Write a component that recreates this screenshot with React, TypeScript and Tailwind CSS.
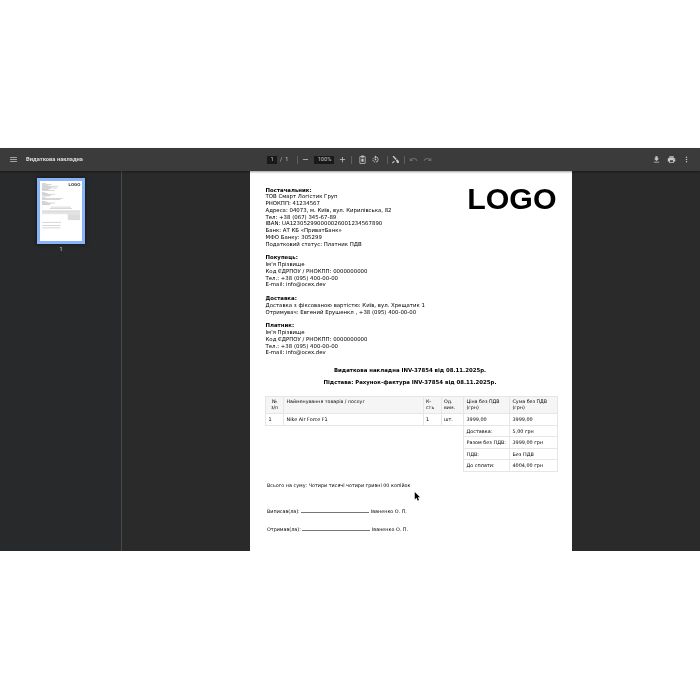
import React from "react";

const Icon = ({ d, className }: { d: string; className?: string }) => (
    <svg viewBox="0 0 24 24" fill="currentColor" className={"w-[9px] h-[9px] shrink-0 " + (className ?? "")}>
        <path d={d} />
    </svg>
);

const icons = {
    menu: "M3 18h18v-2H3v2zm0-5h18v-2H3v2zm0-7v2h18V6H3z",
    minus: "M19 13H5v-2h14v2z",
    plus: "M19 13h-6v6h-2v-6H5v-2h6V5h2v6h6v2z",
    fit: "M6 3h3V1h6v2h3a2 2 0 0 1 2 2v16a2 2 0 0 1-2 2H6a2 2 0 0 1-2-2V5a2 2 0 0 1 2-2zm0 2v16h12V5h-3v2H9V5H6zm3 5h6v8H9v-8z",
    rotate: "M7.11 8.53L5.7 7.11C4.8 8.27 4.24 9.61 4.07 11h2.02c.14-.87.49-1.72 1.02-2.47zM6.09 13H4.07c.17 1.39.72 2.73 1.62 3.89l1.41-1.42c-.52-.75-.87-1.59-1.01-2.47zm1.01 5.32c1.16.9 2.51 1.44 3.9 1.61V17.9c-.87-.15-1.71-.49-2.46-1.03L7.1 18.32zM13 4.07V1L8.45 5.55 13 10V6.09c2.84.48 5 2.94 5 5.91s-2.16 5.43-5 5.91v2.02c3.95-.49 7-3.85 7-7.93s-3.05-7.44-7-7.93zM10 10h4v4h-4z",
    annotate: "M4 4l3-2 8 8-3 3-8-9zm9 10l3-3 5 5v5h-5l-3-7zM3 20l5-5 2 2-5 5H3v-2z",
    undo: "M12.5 8c-2.65 0-5.05.99-6.9 2.6L2 7v9h9l-3.62-3.62c1.39-1.16 3.16-1.88 5.12-1.88 3.54 0 6.55 2.31 7.6 5.5l2.37-.78C21.08 11.03 17.15 8 12.5 8z",
    redo: "M18.4 10.6C16.55 8.99 14.15 8 11.5 8c-4.65 0-8.58 3.03-9.96 7.22L3.9 16c1.05-3.19 4.05-5.5 7.6-5.5 1.95 0 3.73.72 5.12 1.88L13 16h9V7l-3.6 3.6z",
    download: "M19 9h-4V3H9v6H5l7 7 7-7zM5 18v2h14v-2H5z",
    print: "M19 8H5c-1.66 0-3 1.34-3 3v6h4v4h12v-4h4v-6c0-1.66-1.34-3-3-3zm-3 11H8v-5h8v5zm3-7c-.55 0-1-.45-1-1s.45-1 1-1 1 .45 1 1-.45 1-1 1zm-1-9H6v4h12V3z",
    more: "M12 8c1.1 0 2-.9 2-2s-.9-2-2-2-2 .9-2 2 .9 2 2 2zm0 2c-1.1 0-2 .9-2 2s.9 2 2 2 2-.9 2-2-.9-2-2-2zm0 6c-1.1 0-2 .9-2 2s.9 2 2 2 2-.9 2-2-.9-2-2-2z",
};

const Block = ({ title, lines }: { title: string; lines: string[] }) => (
    <div className="mb-[7px]">
        <div className="font-bold">{title}</div>
        {lines.map((l) => (
            <div key={l}>{l}</div>
        ))}
    </div>
);

// thumbnail lines: [x, y, width], in page pixels
const thumbLines = [
    [15, 18, 32], [15, 25, 75], [15, 32, 50], [15, 38, 125], [15, 45, 70], [15, 52, 115], [15, 59, 65], [15, 65, 50], [15, 72, 97],
    [15, 86, 25], [15, 93, 45], [15, 99, 102], [15, 106, 70], [15, 113, 60],
    [15, 127, 28], [15, 133, 160], [15, 140, 140],
    [15, 154, 25], [15, 160, 45], [15, 167, 102], [15, 174, 70], [15, 180, 60],
    [83, 198, 153], [73, 211, 173],
    [17, 314, 144], [17, 341, 140], [17, 358, 140],
];

const Thumb = () => (
    <svg viewBox="0 0 322 460" className="w-[42px] h-[60px] block bg-white">
        <g fill="#a8a8a8">
            {thumbLines.map(([x, y, w]) => (
                <rect key={x + "-" + y} x={x} y={y} width={w} height="3.5" />
            ))}
        </g>
        <g fill="#dcdcdc">
            <rect x="15" y="225" width="292" height="18" />
            <rect x="15" y="243" width="292" height="11" opacity="0.8" />
            <rect x="213" y="254" width="94" height="46" />
        </g>
        <text x="218" y="40" fontSize="31" fontWeight="700" fontFamily="Liberation Sans, sans-serif" fill="#111">LOGO</text>
    </svg>
);

const cell = "border border-[#e6e6e6] px-[2.5px] py-[2px] align-top whitespace-nowrap";
const head = "border border-[#e6e6e6] px-[2.5px] py-[2px] align-top bg-[#f5f5f5] text-[4.75px]";

const totals = [
    ["Доставка:", "5,00 грн"],
    ["Разом без ПДВ:", "3999,00 грн"],
    ["ПДВ:", "Без ПДВ"],
    ["До сплати:", "4004,00 грн"],
];

const Sep = ({ className }: { className: string }) => <div className={"w-px h-[8px] bg-[#5f5f5f] " + className} />;

export default function App() {
    return (
        <div className="w-[700px] h-[700px] bg-white overflow-hidden pt-[148px] font-['DejaVu_Sans',sans-serif]">
            <div className="h-[403px] flex flex-col bg-[#2a2a2a]">
                <header className="h-[23px] shrink-0 bg-[#3b3b3b] flex items-center text-[#c8c8c8] shadow-[0_1px_2px_#00000066] relative z-10 blur-[0.2px]">
                    <div className="w-[250px] flex items-center pl-[8.5px]">
                        <Icon d={icons.menu} />
                        <span className="ml-[8.5px] text-[5.8px] font-bold font-['Roboto',sans-serif] text-[#dcdcdc]">Видаткова накладна</span>
                    </div>
                    <div className="flex items-center text-[5.6px]">
                        <span className="ml-[17px] w-[10px] h-[8px] bg-[#191919] flex items-center justify-center font-['Roboto',sans-serif]">1</span>
                        <span className="ml-[3px] font-['Roboto',sans-serif]">/</span>
                        <span className="ml-[3px] font-['Roboto',sans-serif]">1</span>
                        <Sep className="ml-[9px]" />
                        <Icon d={icons.minus} className="ml-[2.5px]" />
                        <span className="ml-[4.5px] w-[20px] h-[8px] bg-[#191919] flex items-center justify-center font-['Roboto',sans-serif]">100%</span>
                        <Icon d={icons.plus} className="ml-[3.5px]" />
                        <Sep className="ml-[4px]" />
                        <Icon d={icons.fit} className="ml-[6px]" />
                        <Icon d={icons.rotate} className="ml-[4px]" />
                        <Sep className="ml-[7px]" />
                        <Icon d={icons.annotate} className="ml-[3px]" />
                        <Sep className="ml-[4.5px]" />
                        <Icon d={icons.undo} className="ml-[3.5px] text-[#6f6f6f]" />
                        <Icon d={icons.redo} className="ml-[5px] text-[#6f6f6f]" />
                    </div>
                    <div className="ml-auto flex items-center gap-[6px] pr-[9px] text-[#c8c8c8]">
                        <Icon d={icons.download} />
                        <Icon d={icons.print} />
                        <Icon d={icons.more} />
                    </div>
                </header>
                <div className="flex-1 flex min-h-0">
                    <aside className="w-[122px] shrink-0 border-r border-[#4a4a4a] bg-[#28292b] flex flex-col items-center pt-[7px] pl-px">
                        <div className="border-[3px] border-[#8ab4f8] w-[48px] h-[66px] shadow-[0_0_4px_#00000099] blur-[0.3px]">
                            <Thumb />
                        </div>
                        <div className="mt-[1px] text-[5.6px] text-[#d5d5d5] font-['Roboto',sans-serif]">1</div>
                    </aside>
                    <main className="flex-1 flex min-w-0">
                        <div className="ml-[128px] w-[322px] h-full bg-white text-black overflow-hidden pl-[15.5px] pr-[15px] pt-[15.5px] text-[5.4px] leading-[6.75px] relative blur-[0.2px]">
                            <div className="absolute right-[15.5px] top-[12px] text-[30.3px] leading-[32px] font-bold font-['Liberation_Sans',sans-serif]">LOGO</div>
                            <Block title="Постачальник:" lines={["ТОВ Смарт Логістик Груп", "РНОКПП: 41234567", "Адреса: 04073, м. Київ, вул. Кирилівська, 82", "Тел: +38 (067) 345-67-89", "IBAN: UA123052990000026001234567890", "Банк: АТ КБ «ПриватБанк»", "МФО Банку: 305299", "Податковий статус: Платник ПДВ"]} />
                            <Block title="Покупець:" lines={["Ім'я Прізвище", "Код ЄДРПОУ / РНОКПП: 0000000000", "Тел.: +38 (095) 400-00-00", "E-mail: info@ocex.dev"]} />
                            <Block title="Доставка:" lines={["Доставка з фіксованою вартістю: Київ, вул. Хрещатик 1", "Отримувач: Евгений Ерушенкл , +38 (095) 400-00-00"]} />
                            <Block title="Платник:" lines={["Ім'я Прізвище", "Код ЄДРПОУ / РНОКПП: 0000000000", "Тел.: +38 (095) 400-00-00", "E-mail: info@ocex.dev"]} />
                            <div className="text-center font-bold mt-[10.5px] pr-[2.5px]">Видаткова накладна INV-37854 від 08.11.2025р.</div>
                            <div className="text-center font-bold mt-[5.5px] pr-[2.5px]">Підстава: Рахунок-фактура INV-37854 від 08.11.2025р.</div>
                            <table className="mt-[10px] -ml-[0.5px] w-[292px] table-fixed border-collapse text-[4.9px] leading-[6.4px]">
                                <colgroup>
                                    <col className="w-[18px]" />
                                    <col className="w-[139.5px]" />
                                    <col className="w-[18px]" />
                                    <col className="w-[22.5px]" />
                                    <col className="w-[46px]" />
                                    <col className="w-[48px]" />
                                </colgroup>
                                <tbody>
                                    <tr>
                                        <td className={head + " text-center"}>№<br />з/п</td>
                                        <td className={head}>Найменування товарів / послуг</td>
                                        <td className={head}>К-<br />сть</td>
                                        <td className={head}>Од.<br />вим.</td>
                                        <td className={head}>Ціна без ПДВ<br />(грн)</td>
                                        <td className={head}>Сума без ПДВ<br />(грн)</td>
                                    </tr>
                                    <tr>
                                        <td className={cell + " h-[11px]"}>1</td>
                                        <td className={cell}>Nike Air Force F1</td>
                                        <td className={cell}>1</td>
                                        <td className={cell}>шт.</td>
                                        <td className={cell}>3999,00</td>
                                        <td className={cell}>3999,00</td>
                                    </tr>
                                    {totals.map(([k, v]) => (
                                        <tr key={k}>
                                            <td colSpan={4} />
                                            <td className={cell + " h-[11.5px]"}>{k}</td>
                                            <td className={cell}>{v}</td>
                                        </tr>
                                    ))}
                                </tbody>
                            </table>
                            <div className="mt-[10px] ml-[1.5px] text-[4.85px]">Всього на суму: Чотири тисячі чотири гривні 00 копійок</div>
                            <div className="mt-[20px] ml-[1.5px] text-[4.85px]">Виписав(ла): <span className="inline-block w-[68px] border-b-[0.7px] border-[#777] h-[5px]" /> Іваненко О. П.</div>
                            <div className="mt-[10.5px] ml-[1.5px] text-[4.85px]">Отримав(ла): <span className="inline-block w-[68px] border-b-[0.7px] border-[#777] h-[5px]" /> Іваненко О. П.</div>
                            <svg viewBox="0 0 8 12" className="absolute left-[164px] top-[321px] w-[6px] h-[9px]">
                                <path d="M1 0v10l2.4-2.2L5 11.5l1.7-.8L5 7h3z" fill="#000" />
                            </svg>
                        </div>
                    </main>
                </div>
            </div>
        </div>
    );
}
